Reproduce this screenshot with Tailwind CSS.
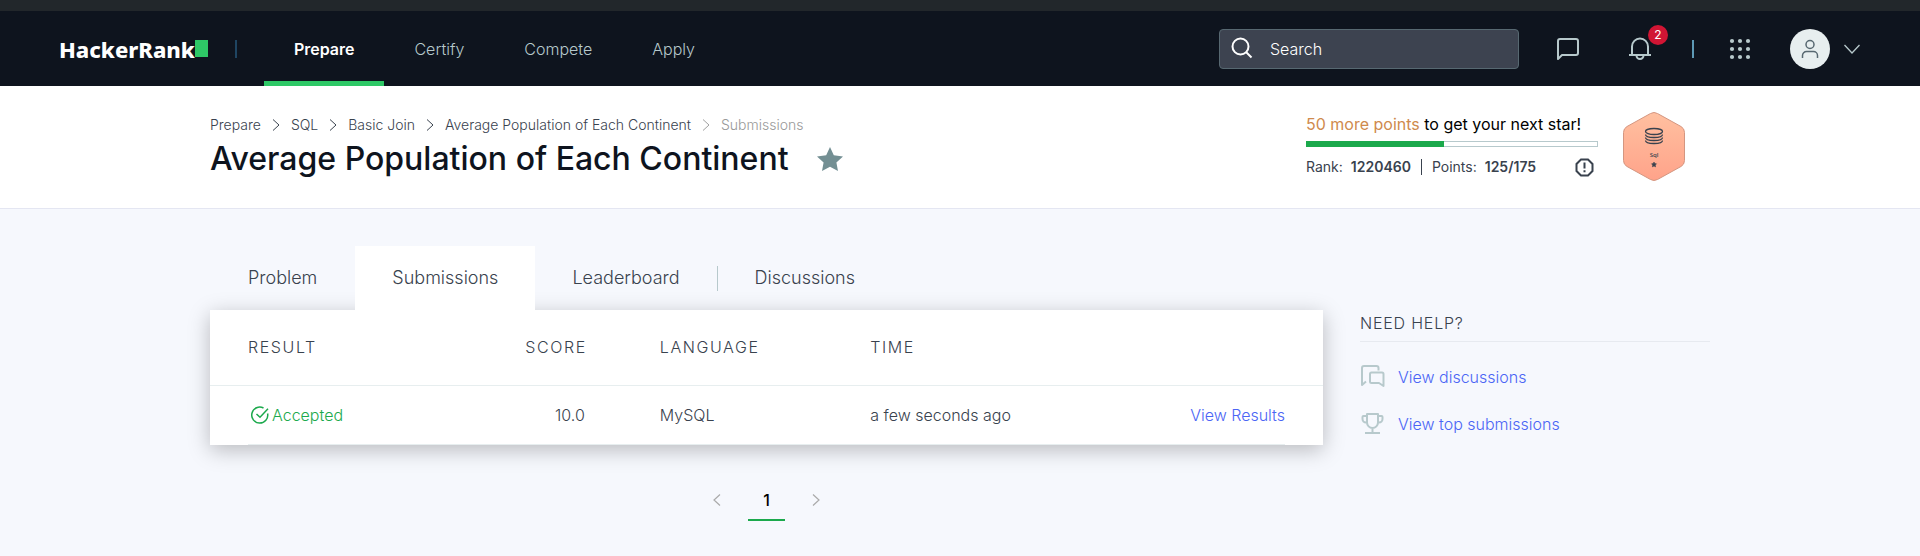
<!DOCTYPE html>
<html lang="en">
<head>
<meta charset="utf-8">
<meta name="viewport" content="width=device-width, initial-scale=1">
<title>Average Population of Each Continent | HackerRank</title>
<script src="https://cdn.jsdelivr.net/npm/@tailwindcss/browser@4"></script>
</head>
<body class="min-h-screen bg-[#f6f8fd] font-['Inter','Liberation_Sans',sans-serif] text-[#39424e]">

<header class="border-t-11 border-[#22272b] bg-[#0e141e] text-[#b7c9cc]">
  <div class="flex h-[75px] items-center pl-[59px] pr-[60px]">
    <a href="#" class="flex items-center font-['Noto_Sans','Liberation_Sans',sans-serif] text-[22px] leading-none font-extrabold text-white" aria-label="HackerRank">
      <span>HackerRank</span><span class="h-[17px] w-[13px] bg-[#2ec866]"></span>
    </a>
    <span class="ml-[27px] h-[18px] w-0.5 bg-[#1f4562]"></span>
    <nav class="ml-[27px] flex h-full text-base">
      <a href="#" class="flex items-center border-y-5 border-t-transparent border-b-[#2ec866] px-[30px] font-semibold text-white">Prepare</a>
      <a href="#" class="flex items-center px-[30px] font-light">Certify</a>
      <a href="#" class="flex items-center px-[30px] font-light">Compete</a>
      <a href="#" class="flex items-center px-[30px] font-light">Apply</a>
    </nav>
    <label class="ml-auto flex h-10 w-[300px] items-center rounded-[4px] border border-[#576871] bg-[#3d4350] pl-[10px] text-white">
      <svg class="size-6 shrink-0" viewBox="0 0 24 24" fill="none" stroke="currentColor" stroke-width="2" aria-hidden="true"><circle cx="10.5" cy="9.5" r="8"/><path d="M16 15l5.500 5.500"/></svg>
      <input type="search" placeholder="Search" aria-label="Search" class="ml-4 w-full bg-transparent text-base font-light text-white placeholder-white outline-none">
    </label>
    <button type="button" aria-label="Messages" class="ml-[37px]">
      <svg class="size-6" viewBox="0 0 24 24" fill="none" stroke="currentColor" stroke-width="2" stroke-linejoin="round"><path d="M2 22V4a2 2 0 0 1 2-2h16a2 2 0 0 1 2 2v12a2 2 0 0 1-2 2H6z"/></svg>
    </button>
    <button type="button" aria-label="Notifications, 2 new" class="relative ml-12">
      <svg class="size-6" viewBox="0 0 24 24" fill="none" stroke="currentColor" stroke-width="2" stroke-linejoin="round"><path d="M1 18h22M4 18V9.500a8 8 0 0 1 16 0V18M8.500 18.500a3.500 3.500 0 0 0 7 0"/></svg>
      <span class="absolute -top-3 left-5 flex size-5 items-center justify-center rounded-full bg-[#d11534] text-xs text-white">2</span>
    </button>
    <span class="ml-10 h-[18px] w-0.5 bg-[#5d99b5]"></span>
    <button type="button" aria-label="Apps" class="ml-[34px]">
      <svg class="size-6" viewBox="0 0 24 24" fill="currentColor"><circle cx="4" cy="4" r="2.100"/><circle cx="12" cy="4" r="2.100"/><circle cx="20" cy="4" r="2.100"/><circle cx="4" cy="12" r="2.100"/><circle cx="12" cy="12" r="2.100"/><circle cx="20" cy="12" r="2.100"/><circle cx="4" cy="20" r="2.100"/><circle cx="12" cy="20" r="2.100"/><circle cx="20" cy="20" r="2.100"/></svg>
    </button>
    <button type="button" aria-label="Account" class="ml-[38px] flex items-center gap-[14px]">
      <span class="flex size-10 items-center justify-center rounded-full bg-[#e7eeef] text-[#576871]">
        <svg class="size-5" viewBox="0 0 20 20" fill="none" stroke="currentColor" stroke-width="1.500"><circle cx="10" cy="5.500" r="4"/><path d="M2.500 19v-2.500a4 4 0 0 1 4-4h7a4 4 0 0 1 4 4V19"/></svg>
      </span>
      <svg class="h-4 w-4" viewBox="0 0 16 16" fill="none" stroke="currentColor" stroke-width="1.300"><path d="M0.500 4l7.500 8 7.500-8"/></svg>
    </button>
  </div>
</header>

<section class="border-b border-[#e4e6f2] bg-white">
  <div class="mx-auto flex min-h-[122px] max-w-[1500px] items-start justify-between pr-[25px]">
    <div class="pt-[29px]">
      <nav aria-label="Breadcrumb" class="flex items-center gap-[11px] text-sm leading-5 font-light">
        <a href="#">Prepare</a>
        <svg class="h-3 w-2" viewBox="0 0 8 12" fill="none" stroke="currentColor"><path d="M1 0.500L7 6l-6 5.500"/></svg>
        <a href="#">SQL</a>
        <svg class="h-3 w-2" viewBox="0 0 8 12" fill="none" stroke="currentColor"><path d="M1 0.500L7 6l-6 5.500"/></svg>
        <a href="#">Basic Join</a>
        <svg class="h-3 w-2" viewBox="0 0 8 12" fill="none" stroke="currentColor"><path d="M1 0.500L7 6l-6 5.500"/></svg>
        <a href="#">Average Population of Each Continent</a>
        <svg class="h-3 w-2 text-[#a0a0a0]" viewBox="0 0 8 12" fill="none" stroke="currentColor"><path d="M1 0.500L7 6l-6 5.500"/></svg>
        <span class="text-[#999]">Submissions</span>
      </nav>
      <div class="mt-2 flex items-center gap-7">
        <h1 class="text-[32px] leading-8 font-medium text-[#0e141e]">Average Population of Each Continent</h1>
        <button type="button" aria-label="Bookmark" class="text-[#738f93]">
          <svg class="h-6 w-[26px]" viewBox="0 0 26 24" fill="currentColor"><path d="M13 0l3.800 8.200 9.200 1.200-6.600 6.200L21 24l-8-4.200L5 24l1.600-8.400L0 9.400l9.200-1.200z"/></svg>
        </button>
      </div>
    </div>
    <div class="flex gap-[25px] pt-[26px]">
      <div class="w-[292px] pt-[2px]">
        <p class="text-base leading-5 whitespace-nowrap text-black"><span class="text-[#cf8a4d]">50 more points</span> to get your next star!</p>
        <div class="mt-[7px] h-1.5 border border-[#b7c9cc]" role="progressbar" aria-label="Points" aria-valuemin="0" aria-valuemax="175" aria-valuenow="125">
          <div class="-m-px h-1.5 w-[138px] bg-[#1ba94c]"></div>
        </div>
        <div class="mt-2.5 flex items-center text-sm leading-5 whitespace-nowrap">
          <span>Rank:</span><strong class="ml-2 font-semibold">1220460</strong>
          <span class="mx-2.5 h-4 w-px bg-[#39424e]"></span>
          <span>Points:</span><strong class="ml-2 font-semibold">125/175</strong>
          <svg class="ml-auto mr-1 size-[19px]" viewBox="0 0 19 19" fill="none" stroke="currentColor" stroke-width="2"><path d="M6 1.500h7l4.500 4.500v7L13 17.500H6L1.500 13V6z"/><path d="M9.500 4.500v6M9.500 12.200v2"/></svg>
        </div>
      </div>
      <svg class="h-[69px] w-[62px]" viewBox="0 0 62 69" role="img" aria-label="Sql badge, one star">
        <defs><linearGradient id="badge" x1="0" y1="0" x2="0" y2="1"><stop offset="0" stop-color="#ffc0a0"/><stop offset="1" stop-color="#ffa38a"/></linearGradient></defs>
        <path d="M27.500 1.500a7 7 0 0 1 7 0L58 14.500a7 7 0 0 1 3.500 6v28a7 7 0 0 1-3.500 6l-23.500 13a7 7 0 0 1-7 0L4 54.500a7 7 0 0 1-3.500-6v-28a7 7 0 0 1 3.500-6z" fill="url(#badge)" stroke="#d49680"/>
        <g fill="none" stroke="#39424e" stroke-width="1.300"><ellipse cx="31" cy="19.500" rx="8.500" ry="3"/><path d="M22.500 22.500c0 4 17 4 17 0M22.500 25.500c0 4 17 4 17 0M22.500 28.500c0 4 17 4 17 0"/></g>
        <text x="31" y="45" text-anchor="middle" font-size="6" font-weight="600" font-family="Open Sans, sans-serif" fill="#39424e">Sql</text>
        <path d="M31 50l.8 1.600 1.700.2-1.200 1.200.3 1.900-1.600-.9-1.600.9.300-1.900-1.200-1.200 1.700-.2z" fill="#39424e" stroke="#39424e" stroke-width=".5"/>
      </svg>
    </div>
  </div>
</section>

<main class="mx-auto flex max-w-[1500px] items-start gap-[37px] pt-[37px]">
  <div class="min-w-0 flex-1">
    <nav class="relative z-10 flex h-16 items-center text-lg font-light" aria-label="Challenge">
      <a href="#" class="px-[38px]">Problem</a>
      <a href="#" aria-current="page" class="flex h-full items-center bg-white px-[37px]">Submissions</a>
      <a href="#" class="px-[37px]">Leaderboard</a>
      <span class="h-[25px] w-px bg-[#b7c9cc]"></span>
      <a href="#" class="px-[37px]">Discussions</a>
    </nav>
    <div class="bg-white shadow-[0_5px_20px_rgba(0,0,0,0.25)]">
      <table class="w-full table-fixed text-left text-base font-light">
        <thead>
          <tr class="h-[75px] border-b border-[#e7eeef] uppercase tracking-widest">
            <th scope="col" class="w-[17%] pl-[38px] font-light">Result</th>
            <th scope="col" class="w-[20%] pr-[35px] text-right font-light">Score</th>
            <th scope="col" class="w-[19%] pl-[38px] font-light">Language</th>
            <th scope="col" class="pl-[37px] font-light">Time</th>
            <th scope="col" class="w-[18%]"><span class="sr-only">Details</span></th>
          </tr>
        </thead>
        <tbody>
          <tr class="h-[60px]">
            <td class="pl-[41px] text-[#1ba94c]">
              <span class="flex items-center gap-[3px]">
                <svg class="size-[18px]" viewBox="0 0 18 18" fill="none" stroke="currentColor" stroke-width="1.500"><path d="M16.600 7.500A8 8 0 1 1 12.500 2"/><path d="M5.500 8l3.500 3.300 8-8.500"/></svg>
                Accepted
              </span>
            </td>
            <td class="pr-[37px] text-right">10.0</td>
            <td class="pl-[38px]">MySQL</td>
            <td class="pl-[37px] whitespace-nowrap">a few seconds ago</td>
            <td class="pr-[38px] text-right whitespace-nowrap"><a href="#" class="text-[#4b65f5]">View Results</a></td>
          </tr>
        </tbody>
      </table>
      <div class="mx-[38px] -mt-px border-b border-[#e7eeef]"></div>
    </div>
    <nav aria-label="Pagination" class="mt-10 flex items-start justify-center gap-[27px]">
      <button type="button" aria-label="Previous page" class="pt-[9px] text-[#aaa]"><svg class="h-3 w-2" viewBox="0 0 8 12" fill="none" stroke="currentColor" stroke-width="1.200"><path d="M7 0.500L1 6l6 5.500"/></svg></button>
      <a href="#" aria-current="page" class="w-[37px] border-b-2 border-[#1ba94c] pt-1 pb-2 text-center text-base leading-[22px] font-medium text-black">1</a>
      <button type="button" aria-label="Next page" class="pt-[9px] text-[#aaa]"><svg class="h-3 w-2" viewBox="0 0 8 12" fill="none" stroke="currentColor" stroke-width="1.200"><path d="M1 0.500L7 6l-6 5.500"/></svg></button>
    </nav>
  </div>
  <aside class="w-[350px] shrink-0 pt-[65px] font-light">
    <h2 class="border-b border-[#e7eaf0] pb-[6px] text-base leading-6 tracking-wider uppercase">Need Help?</h2>
    <ul class="mt-[22px] space-y-[22px] text-base leading-6 text-[#4b65f5]">
      <li><a href="#" class="flex items-center gap-[13px]">
        <svg class="size-[25px]" viewBox="0 0 25 25" fill="none" stroke="#b7c9cc" stroke-width="2" stroke-linejoin="round"><path d="M18.500 6.500V4a2 2 0 0 0-2-2H4a2 2 0 0 0-2 2v17l4-3.500"/><path d="M23.500 22V10a1.500 1.500 0 0 0-1.500-1.500H11.500A1.500 1.500 0 0 0 10 10v7.500a1.500 1.500 0 0 0 1.500 1.500H19z"/></svg>
        View discussions</a></li>
      <li><a href="#" class="flex items-center gap-[13px]">
        <svg class="size-[25px]" viewBox="0 0 25 25" fill="none" stroke="#b7c9cc" stroke-width="2" stroke-linejoin="round"><path d="M7 3h11v8.500a5.500 5.500 0 0 1-11 0zM7 5H3.500a1 1 0 0 0-1 1v2a3.500 3.500 0 0 0 3.500 3.500h1M18 5h3.500a1 1 0 0 1 1 1v2a3.500 3.500 0 0 1-3.500 3.500h-1M12.500 17v5M5 22h15"/></svg>
        View top submissions</a></li>
    </ul>
  </aside>
</main>
</body>
</html>
